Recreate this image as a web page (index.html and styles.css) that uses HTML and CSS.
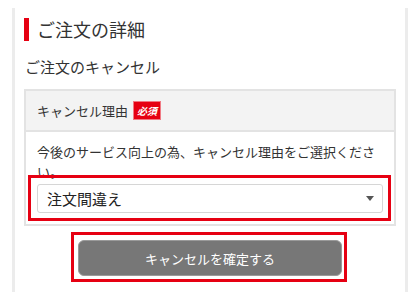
FILE: index.html
```html
<!DOCTYPE html>
<html lang="ja">
<head>
<meta charset="utf-8">
<link rel="stylesheet" href="styles.css">
</head>
<body>
<div class="panel">
  <h2 class="heading">ご注文の詳細</h2>
  <h3 class="subheading">ご注文のキャンセル</h3>
  <div class="table">
    <div class="table-head">キャンセル理由<span class="badge">必須</span></div>
    <div class="table-body">
      <p class="note">今後のサービス向上の為、キャンセル理由をご選択ください。</p>
      <div class="select-wrap highlight-select">
        <select class="select">
          <option>注文間違え</option>
        </select>
        <span class="arrow"></span>
      </div>
    </div>
  </div>
  <div class="actions">
    <div class="btn-wrap highlight-btn">
      <button class="btn" type="button">キャンセルを確定する</button>
    </div>
  </div>
</div>
</body>
</html>
```
FILE: styles.css
```css
* { box-sizing: border-box; }
body {
  margin: 0;
  background: #fff;
  font-family: "Noto Sans CJK JP", "Noto Sans", sans-serif;
  color: #333;
}
.panel {
  margin: 8px 0 0 12px;
  width: 396px;
  border-left: 3px solid #ececec;
  border-right: 3px solid #ececec;
  padding: 10px 9px 16px;
}
.heading {
  margin: 0;
  font-size: 18px;
  font-weight: 400;
  line-height: 23px;
  height: 23px;
  border-left: 5px solid #e60012;
  padding-left: 8px;
  color: #333;
}
.subheading {
  margin: 15px 0 0 1px;
  font-size: 15px;
  font-weight: 400;
  line-height: 22px;
  color: #333;
}
.table {
  margin-top: 11px;
  border: 2px solid #e3e3e3;
}
.table-head {
  background: #f3f3f3;
  height: 41px;
  border-bottom: 2px solid #e3e3e3;
  padding: 0 11px;
  display: flex;
  align-items: center;
  font-size: 13px;
  line-height: 20px;
  color: #333;
}
.badge {
  margin-left: 5px;
  background: #e60012;
  border: 1px solid #f07a84;
  color: #fff;
  font-size: 10px;
  font-weight: 700;
  font-style: italic;
  width: 28px;
  height: 19px;
  line-height: 17px;
  text-align: center;
}
.table-body {
  padding: 10px 11px 11px;
}
.note {
  margin: 0;
  font-size: 13px;
  line-height: 20px;
  color: #333;
}
.select-wrap {
  position: relative;
  margin-top: 2px;
}
.select {
  display: block;
  width: 100%;
  height: 29px;
  appearance: none;
  -webkit-appearance: none;
  background: #fff;
  border: 1px solid #d6d6d6;
  border-radius: 3px;
  padding: 0 9px;
  font-family: "Noto Sans CJK JP", "Noto Sans", sans-serif;
  font-size: 15px;
  color: #222;
}
.arrow {
  position: absolute;
  right: 9px;
  top: 12px;
  width: 0;
  height: 0;
  border-left: 4px solid transparent;
  border-right: 4px solid transparent;
  border-top: 5px solid #555;
}
.highlight-select::after {
  content: "";
  position: absolute;
  top: -9px;
  bottom: -8px;
  left: -9px;
  right: -8px;
  border: 3px solid #e60012;
  pointer-events: none;
}
.actions {
  display: flex;
  justify-content: center;
  margin-top: 14px;
}
.btn-wrap {
  position: relative;
}
.btn {
  display: block;
  width: 264px;
  height: 36px;
  background: #777;
  border: 1px solid #9a9a9a;
  border-radius: 6px;
  color: #fff;
  font-family: "Noto Sans CJK JP", "Noto Sans", sans-serif;
  font-size: 13px;
}
.highlight-btn::after {
  content: "";
  position: absolute;
  top: -8px;
  bottom: -6px;
  left: -7px;
  right: -5px;
  border: 3px solid #e60012;
  pointer-events: none;
}
```
